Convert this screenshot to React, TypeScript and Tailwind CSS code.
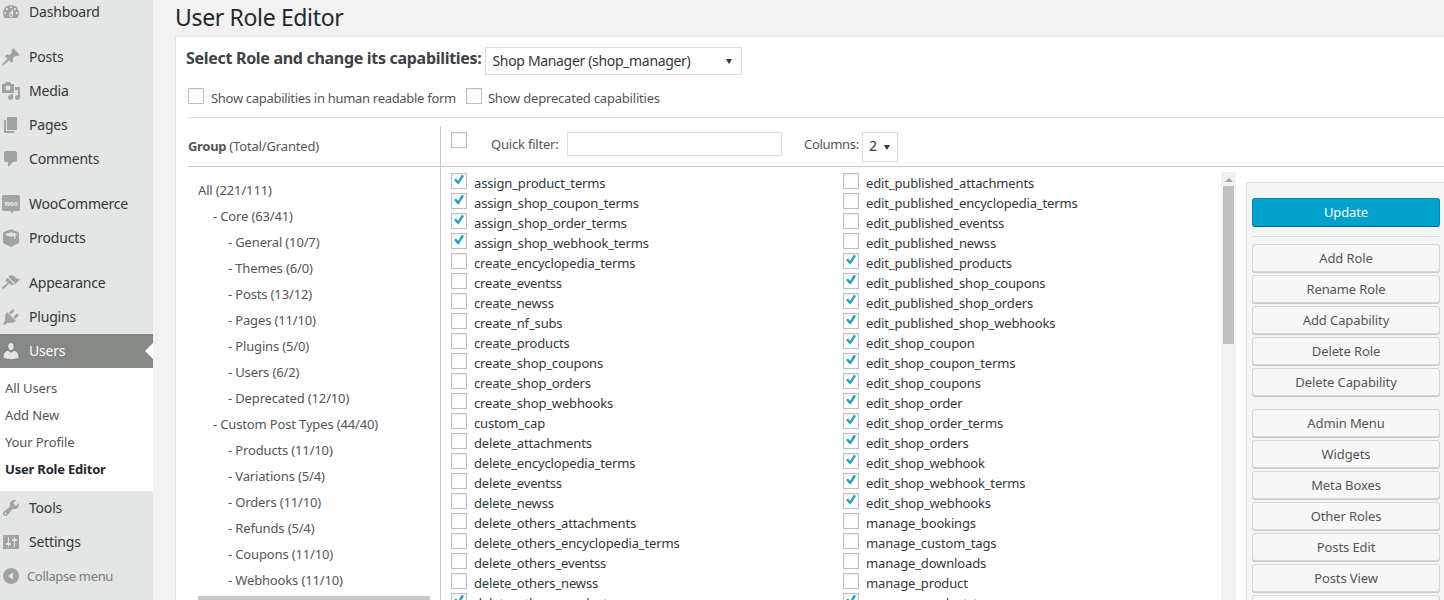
import React from "react";

const icons: Record<string, string> = {
  dashboard:
    "M3.76 16h12.48c1.1-1.37 1.76-3.11 1.76-5 0-4.42-3.58-8-8-8s-8 3.58-8 8c0 1.89.66 3.63 1.76 5zM10 4c.55 0 1 .45 1 1s-.45 1-1 1-1-.45-1-1 .45-1 1-1zM6 6c.55 0 1 .45 1 1s-.45 1-1 1-1-.45-1-1 .45-1 1-1zm8 0c.55 0 1 .45 1 1s-.45 1-1 1-1-.45-1-1 .45-1 1-1zm-5.37 5.55L12 7v6c0 1.1-.9 2-2 2s-2-.9-2-2c0-.57.24-1.08.63-1.45zM4 10c.55 0 1 .45 1 1s-.45 1-1 1-1-.45-1-1 .45-1 1-1zm12 0c.55 0 1 .45 1 1s-.45 1-1 1-1-.45-1-1 .45-1 1-1zm-5 3c0-.55-.45-1-1-1s-1 .45-1 1 .45 1 1 1 1-.45 1-1z",
  posts:
    "M10.44 3.02l1.82-1.82 6.36 6.35-1.83 1.82c-1.05-.68-2.48-.57-3.41.36l-.75.75c-.92.93-1.04 2.35-.35 3.41l-1.83 1.82-2.41-2.41-2.8 2.79c-.42.42-3.38 2.71-3.8 2.29s1.86-3.39 2.28-3.81l2.79-2.79L4.1 9.36l1.83-1.82c1.05.69 2.48.57 3.4-.36l.75-.75c.93-.92 1.05-2.35.36-3.41z",
  media:
    "M13 11V4c0-.55-.45-1-1-1h-1.67L9 1H5L3.67 3H2c-.55 0-1 .45-1 1v7c0 .55.45 1 1 1h10c.55 0 1-.45 1-1zM7 4.5c1.38 0 2.5 1.12 2.5 2.5S8.38 9.5 7 9.5 4.5 8.38 4.5 7 5.62 4.5 7 4.5zM14 6h5v10.5c0 1.38-1.12 2.5-2.5 2.5S14 17.88 14 16.5s1.12-2.5 2.5-2.5c.17 0 .34.02.5.05V9h-3V6zm-4 8.05V13h2v3.5c0 1.38-1.12 2.5-2.5 2.5S7 17.88 7 16.5 8.12 14 9.5 14c.17 0 .34.02.5.05z",
  pages: "M6 15V2h10v13H6zm-1 1h8v2H3V5h2v11z",
  comments:
    "M5 2h9c1.1 0 2 .9 2 2v7c0 1.1-.9 2-2 2h-2l-5 5v-5H5c-1.1 0-2-.9-2-2V4c0-1.1.9-2 2-2z",
  products:
    "M10 1.200l8 3.400v10.300l-8 4.100-8-4.100V4.600zM10 4.200L4.300 6.300l.3.700L10 9l3-1.200V11l1.500-.6V7.200l1.200-.5.3-.700z",
  appearance:
    "M14.48 11.06L7.41 3.99l1.5-1.5c.5-.56 2.3-.47 3.51.32 1.21.8 1.43 1.28 2.91 2.1 1.18.64 2.45 1.26 4.45.85zm-.71.71L6.7 4.7 4.93 6.47c-.39.39-.39 1.02 0 1.41l1.06 1.06c.39.39.39 1.03 0 1.42-.6.6-1.43 1.11-2.21 1.69-.35.26-.7.53-1.01.84C1.43 13.23.4 14.43 1.4 15.4s2.17-.03 3.52-1.38c.31-.31.57-.66.84-1.01.58-.78 1.09-1.61 1.69-2.21.39-.39 1.02-.39 1.41 0l1.06 1.06c.39.39 1.02.39 1.41 0z",
  plugins:
    "M13.11 4.36L9.87 7.6 8 5.73l3.24-3.24c.35-.34 1.05-.2 1.56.32.52.51.66 1.21.31 1.55zm-8 1.77l.91-1.12 9.01 9.01-1.19.84c-.71.71-2.63 1.16-3.82 1.16H6.14L4.9 17.26c-.59.59-1.54.59-2.12 0-.59-.58-.59-1.53 0-2.12l1.24-1.24v-3.88c0-1.13.4-3.19 1.09-3.89zm7.26 3.97l3.24-3.24c.34-.35 1.04-.21 1.55.31.52.51.66 1.21.31 1.55l-3.24 3.25z",
  users:
    "M10 9.25c-2.27 0-2.73-3.44-2.73-3.44C7 4.02 7.82 2 9.97 2c2.16 0 2.98 2.02 2.71 3.81 0 0-.41 3.44-2.68 3.44zm0 2.57L12.72 10c2.39 0 4.52 2.33 4.52 4.53v2.49s-3.65 1.13-7.24 1.13c-3.65 0-7.24-1.13-7.24-1.13v-2.49c0-2.25 1.94-4.48 4.47-4.48z",
  tools:
    "M16.68 9.77c-1.34 1.34-3.3 1.67-4.95.99l-5.41 6.52c-.99.99-2.59.99-3.58 0s-.99-2.59 0-3.57l6.52-5.42c-.68-1.65-.35-3.61.99-4.95 1.28-1.28 3.12-1.62 4.72-1.06l-2.89 2.89 2.82 2.82 2.86-2.87c.53 1.58.18 3.39-1.08 4.65zM3.81 16.21c.4.39 1.04.39 1.43 0 .4-.4.4-1.04 0-1.43-.39-.4-1.03-.4-1.43 0-.39.39-.39 1.03 0 1.43z",
  settings:
    "M18 16V4c0-.55-.45-1-1-1H3c-.55 0-1 .45-1 1v12c0 .55.45 1 1 1h14c.55 0 1-.45 1-1zM8 11h1c.55 0 1 .45 1 1s-.45 1-1 1H8v1.5c0 .28-.22.5-.5.5s-.5-.22-.5-.5V13H6c-.55 0-1-.45-1-1s.45-1 1-1h1V5.5c0-.28.22-.5.5-.5s.5.22.5.5V11zm5-2h-1c-.55 0-1-.45-1-1s.45-1 1-1h1V5.5c0-.28.22-.5.5-.5s.5.22.5.5V7h1c.55 0 1 .45 1 1s-.45 1-1 1h-1v5.5c0 .28-.22.5-.5.5s-.5-.22-.5-.5V9z",
  collapse: "M10 2a8 8 0 1 0 0 16 8 8 0 0 0 0-16zm2 4.5v7L7 10z",
};

const Dashicon = ({ name, className = "" }: { name: string; className?: string }) => (
  <svg viewBox="0 0 20 20" className={`h-5 w-5 shrink-0 fill-current ${className}`}>
    <path fillRule="evenodd" d={icons[name]} />
  </svg>
);

const WooIcon = () => (
  <svg viewBox="0 0 20 20" className="h-5 w-5 shrink-0">
    <path d="M2.500 1h15A1.500 1.500 0 0 1 19 2.500v13a1.500 1.500 0 0 1-1.500 1.500H13l-2 2.500L9.500 17h-7A1.500 1.500 0 0 1 1 15.500v-13A1.500 1.500 0 0 1 2.500 1z" fill="#a2a5a4" />
    <text x="10" y="11.500" textAnchor="middle" fontSize="6.500" fontWeight="700" fill="#e8eae9">
      woo
    </text>
  </svg>
);

const MenuItem = ({ icon, label }: { icon: string; label: string }) => (
  <div className="flex h-[34px] items-center text-[14px] tracking-[-0.2px] text-[#32373c]">
    <div className="flex w-[29px] pl-[1px] text-[#a0a3a1]">
      {icon === "woo" ? <WooIcon /> : <Dashicon name={icon} />}
    </div>
    <span className="pb-[2px]">{label}</span>
  </div>
);

const Sidebar = () => (
  <div className="mt-[-5px] flex h-[620px] w-[153px] shrink-0 flex-col bg-[#e4e6e5]">
    <MenuItem icon="dashboard" label="Dashboard" />
    <div className="mt-[11px]">
      <MenuItem icon="posts" label="Posts" />
      <MenuItem icon="media" label="Media" />
      <MenuItem icon="pages" label="Pages" />
      <MenuItem icon="comments" label="Comments" />
    </div>
    <div className="mt-[11px]">
      <MenuItem icon="woo" label="WooCommerce" />
      <MenuItem icon="products" label="Products" />
    </div>
    <div className="mt-[11px]">
      <MenuItem icon="appearance" label="Appearance" />
      <MenuItem icon="plugins" label="Plugins" />
    </div>
    <div className="flex h-[34px] items-center bg-[#868885] text-[14px] tracking-[-0.2px] text-white">
      <div className="flex w-[29px] pl-[1px] text-[#e4e6e5]">
        <Dashicon name="users" />
      </div>
      <span className="flex-1 pb-[2px]">Users</span>
      <div className="h-0 w-0 border-y-[8px] border-r-[8px] border-y-transparent border-r-white" />
    </div>
    <div className="flex flex-col bg-white pb-[8px] pt-[7px] text-[13px] tracking-[-0.1px] text-[#50565a]">
      {["All Users", "Add New", "Your Profile"].map((s) => (
        <div key={s} className="flex h-[27px] items-center pl-[5px]">
          {s}
        </div>
      ))}
      <div className="flex h-[27px] items-center pl-[5px] font-bold tracking-[-0.2px] text-[#23282d]">User Role Editor</div>
    </div>
    <MenuItem icon="tools" label="Tools" />
    <MenuItem icon="settings" label="Settings" />
    <div className="flex h-[34px] items-center text-[13px] tracking-[-0.35px] text-[#777b7d]">
      <div className="flex w-[27px] pl-[1px] text-[#a0a3a1]">
        <Dashicon name="collapse" />
      </div>
      <span className="pt-[1px]">Collapse menu</span>
    </div>
  </div>
);

const Checkbox = ({ checked = false }: { checked?: boolean }) => (
  <span className="relative block h-[16px] w-[16px] shrink-0 border border-[#bcc0c2] bg-white shadow-[inset_0_1px_2px_rgba(0,0,0,0.08)]">
    {checked && (
      <svg viewBox="0 0 16 16" className="absolute left-[-1px] top-[-1px] h-[16px] w-[16px]">
        <path d="M3 7l2-1.400 2.100 2.500 3.800-6.300 2.100 1.300-5.600 8.600z" fill="#1a9fca" />
      </svg>
    )}
  </span>
);

const groups: [string, number][] = [
  ["All (221/111)", 0],
  ["- Core (63/41)", 1],
  ["- General (10/7)", 2],
  ["- Themes (6/0)", 2],
  ["- Posts (13/12)", 2],
  ["- Pages (11/10)", 2],
  ["- Plugins (5/0)", 2],
  ["- Users (6/2)", 2],
  ["- Deprecated (12/10)", 2],
  ["- Custom Post Types (44/40)", 1],
  ["- Products (11/10)", 2],
  ["- Variations (5/4)", 2],
  ["- Orders (11/10)", 2],
  ["- Refunds (5/4)", 2],
  ["- Coupons (11/10)", 2],
  ["- Webhooks (11/10)", 2],
];

const caps: [string, boolean, string, boolean][] = [
  ["assign_product_terms", true, "edit_published_attachments", false],
  ["assign_shop_coupon_terms", true, "edit_published_encyclopedia_terms", false],
  ["assign_shop_order_terms", true, "edit_published_eventss", false],
  ["assign_shop_webhook_terms", true, "edit_published_newss", false],
  ["create_encyclopedia_terms", false, "edit_published_products", true],
  ["create_eventss", false, "edit_published_shop_coupons", true],
  ["create_newss", false, "edit_published_shop_orders", true],
  ["create_nf_subs", false, "edit_published_shop_webhooks", true],
  ["create_products", false, "edit_shop_coupon", true],
  ["create_shop_coupons", false, "edit_shop_coupon_terms", true],
  ["create_shop_orders", false, "edit_shop_coupons", true],
  ["create_shop_webhooks", false, "edit_shop_order", true],
  ["custom_cap", false, "edit_shop_order_terms", true],
  ["delete_attachments", false, "edit_shop_orders", true],
  ["delete_encyclopedia_terms", false, "edit_shop_webhook", true],
  ["delete_eventss", false, "edit_shop_webhook_terms", true],
  ["delete_newss", false, "edit_shop_webhooks", true],
  ["delete_others_attachments", false, "manage_bookings", false],
  ["delete_others_encyclopedia_terms", false, "manage_custom_tags", false],
  ["delete_others_eventss", false, "manage_downloads", false],
  ["delete_others_newss", false, "manage_product", false],
  ["delete_others_products", true, "manage_product_terms", true],
];

const Cap = ({ name, checked }: { name: string; checked: boolean }) => (
  <div className="flex h-[20px] items-start gap-[7px] text-[13px] tracking-[-0.15px] text-[#32373c]">
    <Checkbox checked={checked} />
    <span className="whitespace-nowrap leading-[20px]">{name}</span>
  </div>
);

const SideButton = ({ label }: { label: string }) => (
  <div className="flex h-[28px] w-[188px] shrink-0 items-center justify-center rounded-[3px] border border-[#d4d6d5] bg-[#f6f7f6] pt-[2px] text-[13px] tracking-[-0.1px] text-[#555] shadow-[0_1px_0_#c9cbca]">
    {label}
  </div>
);

export default function App() {
  return (
    <div className="flex h-[600px] w-[1444px] overflow-hidden bg-[#f1f2f1] font-['Noto_Sans',sans-serif]">
      <Sidebar />
      <div className="flex min-w-0 flex-1 flex-col pl-[22px]">
        <h1 className="flex h-[36px] shrink-0 items-center pb-[2px] text-[23px] font-normal tracking-[-0.35px] text-[#23282d]">
          User Role Editor
        </h1>
        <div className="flex-1 border-l border-t border-[#e5e5e5] bg-white">
          <div className="mt-[10px] flex h-[28px] items-center pl-[10px]">
            <span className="pb-[6px] text-[16px] font-bold tracking-[-0.3px] text-[#3c4246]">
              Select Role and change its capabilities:
            </span>
            <div className="ml-[4px] flex h-[28px] w-[257px] items-center justify-between border border-[#dddddd] pl-[6px] pr-[9px] text-[14px] tracking-[-0.33px] text-[#32373c]">
              <span className="pb-[2px]">Shop Manager (shop_manager)</span>
              <span className="h-0 w-0 border-x-[3px] border-t-[5px] border-x-transparent border-t-[#32373c]" />
            </div>
          </div>
          <div className="ml-[12px] mt-[13px] flex h-[16px] items-center text-[13px] text-[#50565a]">
            <Checkbox />
            <span className="ml-[7px] pt-[5px] tracking-[-0.3px]">Show capabilities in human readable form</span>
            <span className="ml-[10px]">
              <Checkbox />
            </span>
            <span className="ml-[6px] pt-[5px] tracking-[-0.2px]">Show deprecated capabilities</span>
          </div>
          <div className="ml-[12px] mt-[13px] border-t border-[#dddddd]" />

          <div className="ml-[12px] flex h-[49px] border-b border-[#cccccc]">
            <div className="flex w-[252px] items-center pt-[10px] text-[13px] tracking-[-0.15px] text-[#50565a]">
              <b className="mr-[3px] tracking-[-0.3px]">Group</b> (Total/Granted)
            </div>
            <div className="mt-[8px] flex flex-1 items-start border-l border-[#cccccc] pl-[10px] pt-[6px] text-[13px] text-[#50565a]">
              <Checkbox />
              <span className="ml-[24px] mt-[3px] w-[70px] tracking-[-0.2px]">Quick filter:</span>
              <div className="ml-[6px] h-[24px] w-[215px] border border-[#dddddd]" />
              <span className="ml-[22px] mt-[3px] w-[55px] tracking-[-0.3px]">Columns:</span>
              <div className="ml-[3px] flex h-[30px] w-[36px] items-center justify-between border border-[#dddddd] pl-[6px] pr-[7px] text-[14px] text-[#32373c]">
                <span className="pb-[3px]">2</span>
                <span className="h-0 w-0 border-x-[3px] border-t-[5px] border-x-transparent border-t-[#32373c]" />
              </div>
            </div>
          </div>

          <div className="ml-[12px] flex">
            <div className="w-[252px] shrink-0 pl-[10px] pt-[10px] text-[13px] tracking-[-0.15px] text-[#50565a]">
              {groups.map(([label, depth]) => (
                <div
                  key={label}
                  className={`flex h-[26px] items-center whitespace-nowrap pt-[2px] ${
                    depth === 0 ? "" : depth === 1 ? "pl-[15px]" : "pl-[30px]"
                  }`}
                >
                  {label}
                </div>
              ))}
              <div className="mt-[3px] h-[8px] w-[232px] bg-[#c8c9c7]" />
            </div>
            <div className="flex flex-1 border-l border-[#cccccc]">
              <div className="w-[780px] shrink-0 pl-[10px] pt-[6px]">
                <div className="grid grid-cols-[392px_1fr]">
                  {caps.map(([a, ac, b, bc]) => (
                    <React.Fragment key={a}>
                      <Cap name={a} checked={ac} />
                      <Cap name={b} checked={bc} />
                    </React.Fragment>
                  ))}
                </div>
              </div>
              <div className="mt-[5px] flex h-[440px] w-[15px] shrink-0 flex-col items-center bg-[#f1f2f1]">
                <span className="mt-[6px] h-0 w-0 border-x-[4px] border-b-[4px] border-x-transparent border-b-[#a3a5a3]" />
                <div className="mt-[4px] h-[158px] w-[11px] bg-[#bfc1be]" />
              </div>
              <div className="ml-[10px] mt-[15px] flex flex-1 flex-col rounded-tl-[3px] border-l border-t border-[#dddedd] bg-[#f4f5f4] pl-[5px] pt-[15px]">
                <div className="flex h-[29px] w-[188px] items-center justify-center rounded-[3px] border border-[#0089b5] border-b-[#006d8f] bg-[#00a2cc] pt-[1px] text-[13px] tracking-[-0.1px] text-white">
                  Update
                </div>
                <div className="mb-[7px] mt-[9px] w-[188px] border-t border-[#dcdedd]" />
                <div className="flex flex-col gap-[3px]">
                  {["Add Role", "Rename Role", "Add Capability", "Delete Role", "Delete Capability"].map((b) => (
                    <SideButton key={b} label={b} />
                  ))}
                </div>
                <div className="mt-[13px] flex flex-col gap-[3px]">
                  {["Admin Menu", "Widgets", "Meta Boxes", "Other Roles", "Posts Edit", "Posts View", "Export"].map((b) => (
                    <SideButton key={b} label={b} />
                  ))}
                </div>
              </div>
            </div>
          </div>
        </div>
      </div>
    </div>
  );
}
